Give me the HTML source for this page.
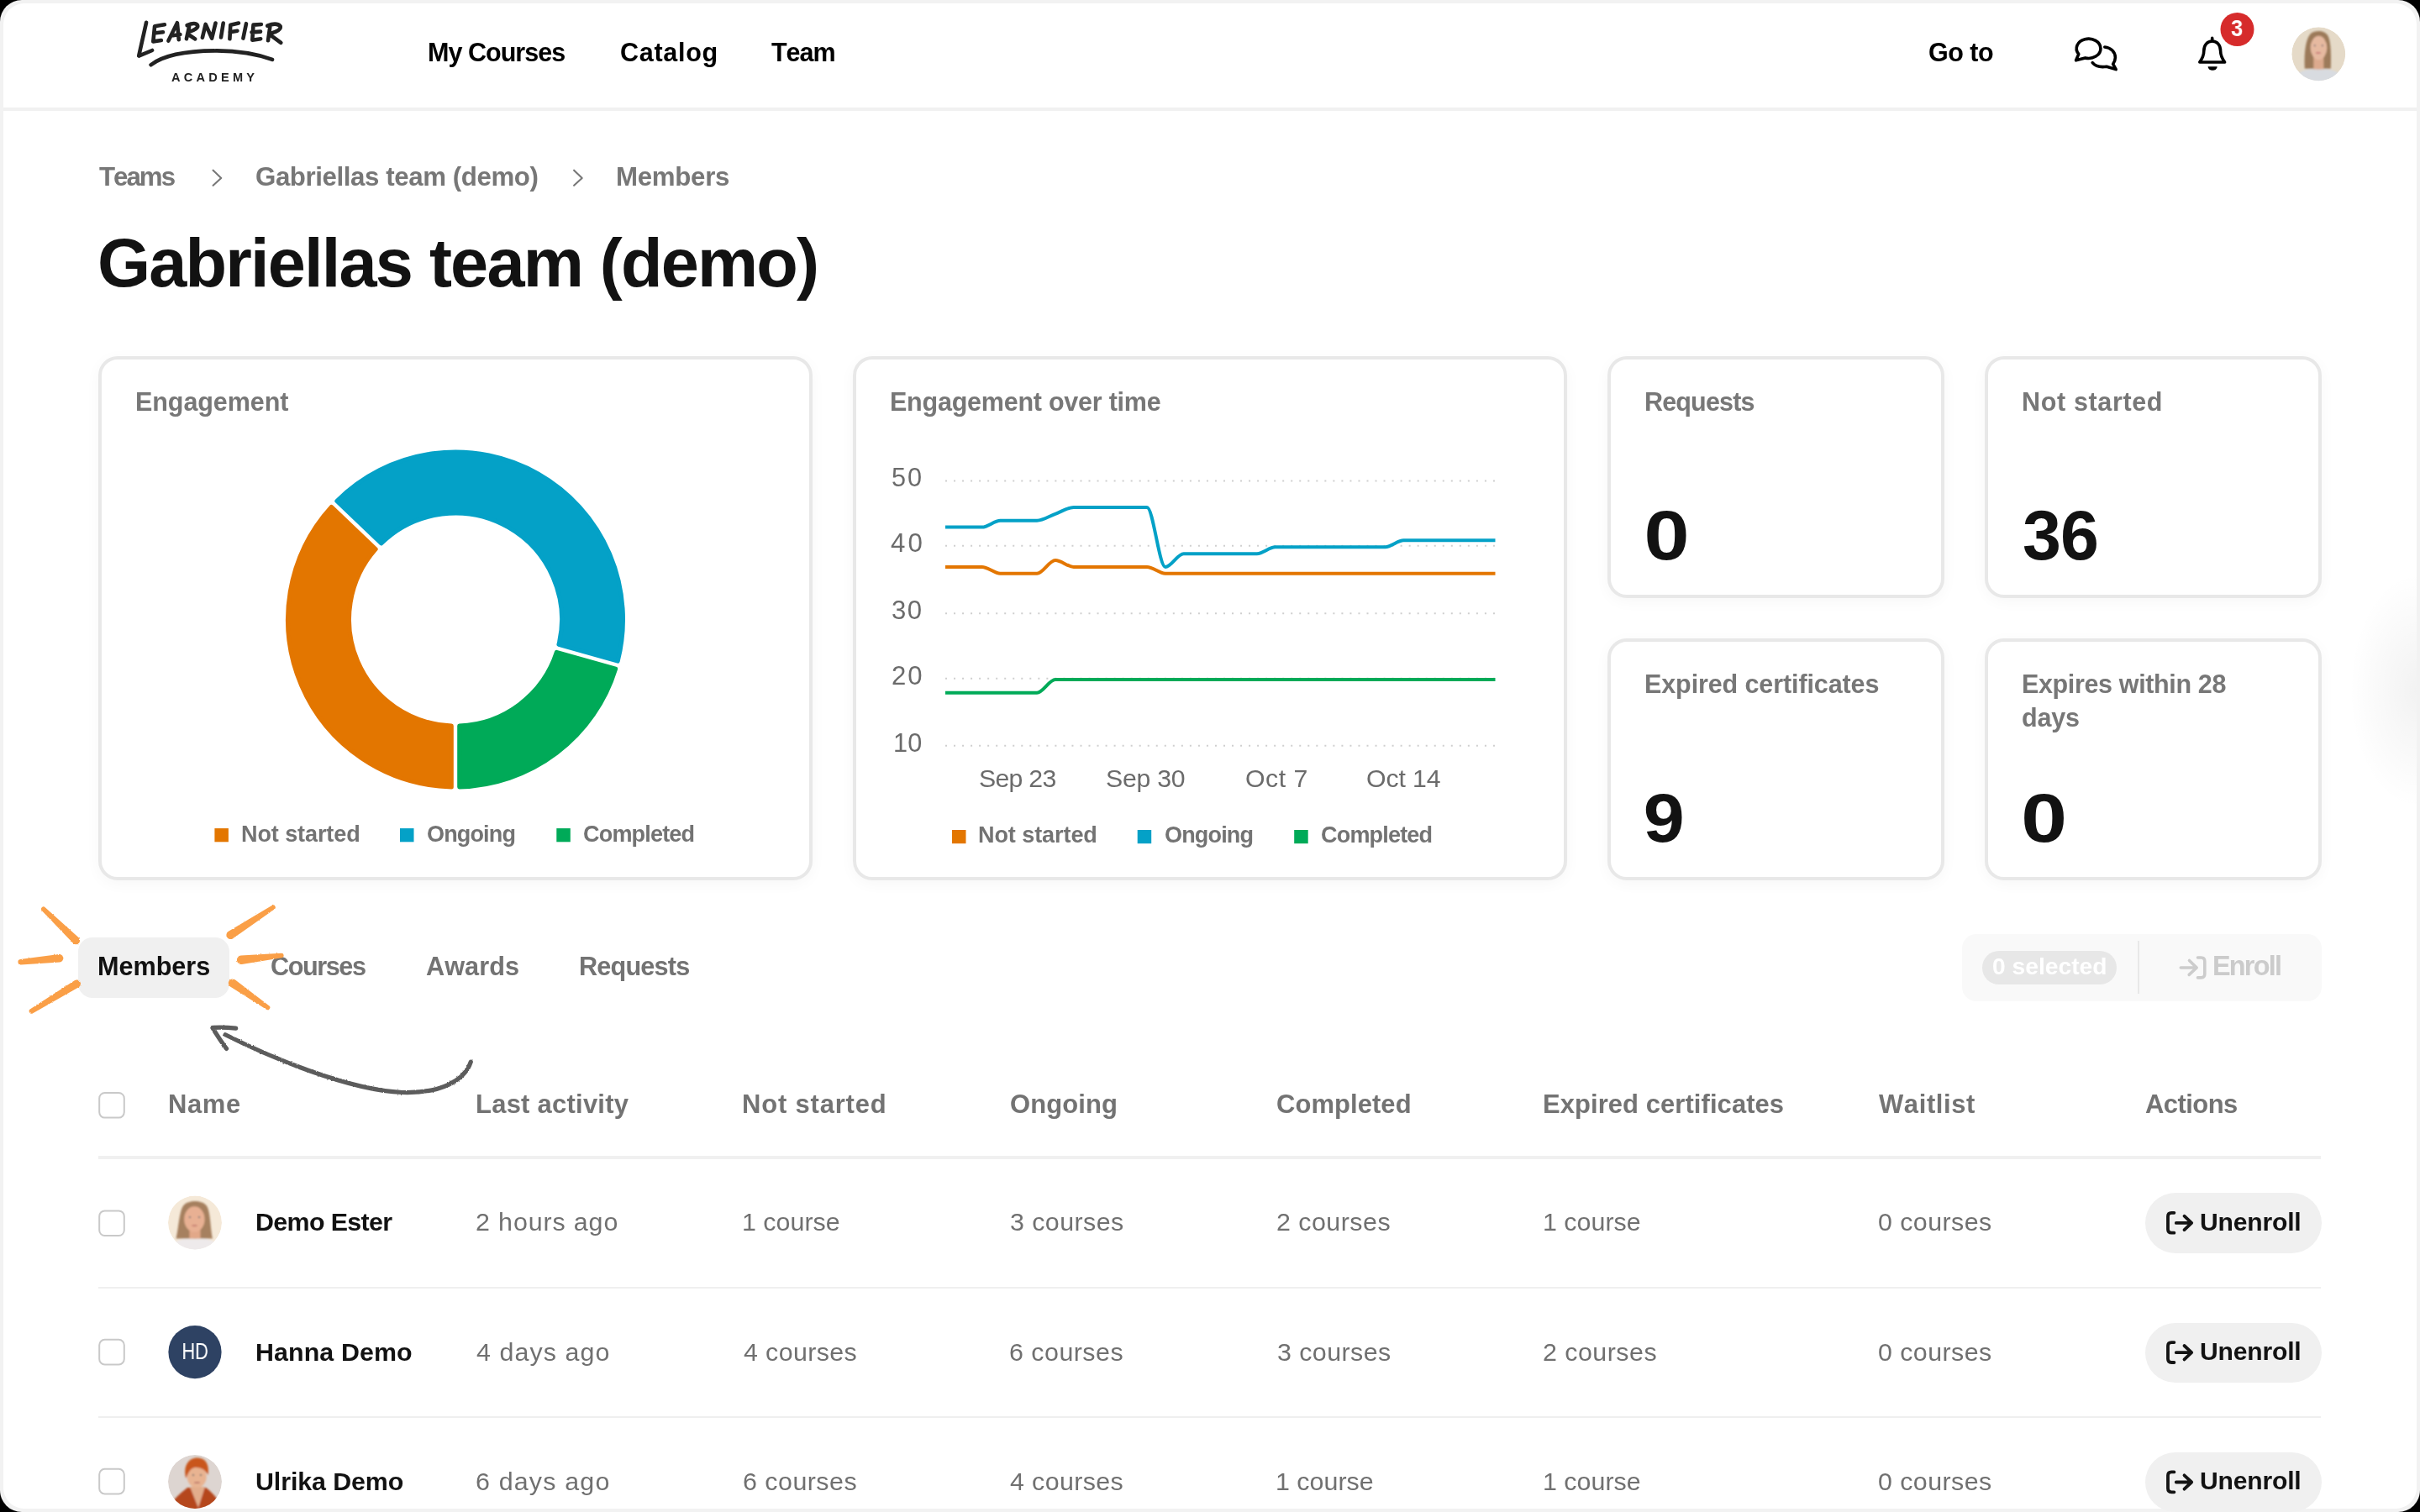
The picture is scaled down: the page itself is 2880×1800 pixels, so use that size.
<!DOCTYPE html>
<html><head><meta charset="utf-8"><style>
html,body{margin:0;padding:0}
body{width:2880px;height:1800px;overflow:hidden;position:relative;background:#000;font-family:"Liberation Sans",sans-serif}
.t{position:absolute;white-space:pre;font-kerning:none;will-change:transform}
.r{position:absolute}
.card{position:absolute;box-sizing:border-box;border:4px solid #e8e8e8;border-radius:23px;background:#fff;box-shadow:0 4px 18px rgba(0,0,0,0.035)}
svg{position:absolute;overflow:visible}
</style></head><body>
<div class="r" style="left:0;top:0;width:2880px;height:1800px;border-radius:26px;background:#f2f2f2"></div>
<div class="r" style="left:4px;top:4px;width:2872px;height:1792px;border-radius:25px;background:#fff;overflow:hidden"></div>
<div class="r" style="left:4px;top:128px;width:2872px;height:4px;background:#f1f1f1"></div>
<div class="r" style="left:2790px;top:680px;width:86px;height:285px;background:radial-gradient(ellipse 80px 140px at 86px 142px, rgba(0,0,0,0.05), rgba(0,0,0,0) 100%)"></div>
<div class="t " style="left:508.96px;top:47.00px;font-size:30.52px;line-height:30.52px;letter-spacing:-0.970px;color:#000;font-weight:700">My Courses</div>
<div class="t " style="left:737.75px;top:47.00px;font-size:30.52px;line-height:30.52px;letter-spacing:0.727px;color:#000;font-weight:700">Catalog</div>
<div class="t " style="left:918.26px;top:47.00px;font-size:30.52px;line-height:30.52px;letter-spacing:-1.034px;color:#000;font-weight:700">Team</div>
<div class="t " style="left:2295.35px;top:47.00px;font-size:30.52px;line-height:30.52px;letter-spacing:-0.508px;color:#000;font-weight:700">Go to</div>
<div class="t " style="left:204.34px;top:85.00px;font-size:14.54px;line-height:14.54px;letter-spacing:4.252px;color:#222;font-weight:700">ACADEMY</div>
<div class="t " style="left:117.65px;top:195.00px;font-size:31.25px;line-height:31.25px;letter-spacing:-1.996px;color:#777777;font-weight:700">Teams</div>
<div class="t " style="left:303.72px;top:195.00px;font-size:31.25px;line-height:31.25px;letter-spacing:-0.417px;color:#777777;font-weight:700">Gabriellas team (demo)</div>
<div class="t " style="left:732.91px;top:195.00px;font-size:31.25px;line-height:31.25px;letter-spacing:-0.306px;color:#777777;font-weight:700">Members</div>
<div class="t " style="left:115.87px;top:273.00px;font-size:81.11px;line-height:81.11px;letter-spacing:-1.809px;color:#121212;font-weight:700">Gabriellas team (demo)</div>
<div class="card" style="left:117px;top:424px;width:850px;height:624px"></div>
<div class="card" style="left:1015px;top:424px;width:850px;height:624px"></div>
<div class="card" style="left:1913px;top:424px;width:401px;height:288px"></div>
<div class="card" style="left:2362px;top:424px;width:401px;height:288px"></div>
<div class="card" style="left:1913px;top:760px;width:401px;height:288px"></div>
<div class="card" style="left:2362px;top:760px;width:401px;height:288px"></div>
<div class="t " style="left:160.96px;top:463.00px;font-size:30.52px;line-height:30.52px;letter-spacing:-0.084px;color:#777777;font-weight:700">Engagement</div>
<div class="t " style="left:1058.76px;top:463.00px;font-size:30.52px;line-height:30.52px;letter-spacing:-0.241px;color:#777777;font-weight:700">Engagement over time</div>
<div class="t " style="left:1957.26px;top:463.00px;font-size:30.52px;line-height:30.52px;letter-spacing:-0.844px;color:#777777;font-weight:700">Requests</div>
<div class="t " style="left:2406.46px;top:463.00px;font-size:30.52px;line-height:30.52px;letter-spacing:0.644px;color:#777777;font-weight:700">Not started</div>
<div class="t " style="left:1957.26px;top:799.00px;font-size:30.52px;line-height:30.52px;letter-spacing:-0.112px;color:#777777;font-weight:700">Expired certificates</div>
<div class="t " style="left:2406.46px;top:799.00px;font-size:30.52px;line-height:30.52px;letter-spacing:-0.368px;color:#777777;font-weight:700">Expires within 28</div>
<div class="t " style="left:2406.15px;top:839.00px;font-size:30.52px;line-height:30.52px;letter-spacing:-0.156px;color:#777777;font-weight:700">days</div>
<div class="t " style="left:1956.53px;top:596.00px;font-size:82.56px;line-height:82.56px;letter-spacing:0.000px;color:#121212;font-weight:700;transform-origin:3.27px 0;transform:scaleX(1.1766)">0</div>
<div class="t " style="left:2406.81px;top:596.00px;font-size:82.56px;line-height:82.56px;letter-spacing:-0.854px;color:#121212;font-weight:700">36</div>
<div class="t " style="left:1956.19px;top:934.00px;font-size:80.96px;line-height:80.96px;letter-spacing:0.000px;color:#121212;font-weight:700;transform-origin:2.81px 0;transform:scaleX(1.0889)">9</div>
<div class="t " style="left:2405.50px;top:934.00px;font-size:80.96px;line-height:80.96px;letter-spacing:0.000px;color:#121212;font-weight:700;transform-origin:3.20px 0;transform:scaleX(1.2155)">0</div>
<div class="t " style="left:286.59px;top:980.00px;font-size:27.04px;line-height:27.04px;letter-spacing:-0.101px;color:#737373;font-weight:700">Not started</div>
<div class="t " style="left:507.89px;top:980.00px;font-size:27.04px;line-height:27.04px;letter-spacing:-0.866px;color:#737373;font-weight:700">Ongoing</div>
<div class="t " style="left:693.89px;top:980.00px;font-size:27.04px;line-height:27.04px;letter-spacing:-0.825px;color:#737373;font-weight:700">Completed</div>
<div class="t " style="left:1164.49px;top:981.00px;font-size:27.04px;line-height:27.04px;letter-spacing:-0.081px;color:#737373;font-weight:700">Not started</div>
<div class="t " style="left:1385.69px;top:981.00px;font-size:27.04px;line-height:27.04px;letter-spacing:-0.849px;color:#737373;font-weight:700">Ongoing</div>
<div class="t " style="left:1571.89px;top:981.00px;font-size:27.04px;line-height:27.04px;letter-spacing:-0.825px;color:#737373;font-weight:700">Completed</div>
<div class="t " style="left:1164.93px;top:912.00px;font-size:30.23px;line-height:30.23px;letter-spacing:-0.704px;color:#6b6b6b;font-weight:400">Sep 23</div>
<div class="t " style="left:1315.93px;top:912.00px;font-size:30.23px;line-height:30.23px;letter-spacing:-0.254px;color:#6b6b6b;font-weight:400">Sep 30</div>
<div class="t " style="left:1481.77px;top:912.00px;font-size:30.23px;line-height:30.23px;letter-spacing:0.527px;color:#6b6b6b;font-weight:400">Oct 7</div>
<div class="t " style="left:1625.57px;top:912.00px;font-size:30.23px;line-height:30.23px;letter-spacing:-0.089px;color:#6b6b6b;font-weight:400">Oct 14</div>
<div class="t " style="left:1061.37px;top:553.00px;font-size:30.67px;line-height:30.67px;letter-spacing:2.013px;color:#6b6b6b;font-weight:400">50</div>
<div class="t " style="left:1059.58px;top:631.00px;font-size:31.25px;line-height:31.25px;letter-spacing:3.178px;color:#6b6b6b;font-weight:400">40</div>
<div class="t " style="left:1061.42px;top:711.00px;font-size:31.11px;line-height:31.11px;letter-spacing:1.501px;color:#6b6b6b;font-weight:400">30</div>
<div class="t " style="left:1061.04px;top:789.00px;font-size:31.11px;line-height:31.11px;letter-spacing:1.881px;color:#6b6b6b;font-weight:400">20</div>
<div class="t " style="left:1063.26px;top:869.00px;font-size:30.67px;line-height:30.67px;letter-spacing:0.121px;color:#6b6b6b;font-weight:400">10</div>
<div class="r" style="left:92.7px;top:1116px;width:180.8px;height:72px;background:#f0f0f0;border-radius:17px"></div>
<div class="t " style="left:115.95px;top:1135.00px;font-size:30.67px;line-height:30.67px;letter-spacing:-0.058px;color:#111;font-weight:700">Members</div>
<div class="t " style="left:321.74px;top:1135.00px;font-size:30.67px;line-height:30.67px;letter-spacing:-1.451px;color:#737373;font-weight:700">Courses</div>
<div class="t " style="left:507.24px;top:1135.00px;font-size:30.67px;line-height:30.67px;letter-spacing:0.047px;color:#737373;font-weight:700">Awards</div>
<div class="t " style="left:688.95px;top:1135.00px;font-size:30.67px;line-height:30.67px;letter-spacing:-0.821px;color:#737373;font-weight:700">Requests</div>
<div class="r" style="left:2335px;top:1111.7px;width:428px;height:80.29999999999995px;background:#f9f9f9;border-radius:17px"></div>
<div class="r" style="left:2359px;top:1132px;width:160px;height:40px;background:#e7e7e7;border-radius:20px"></div>
<div class="t " style="left:2370.88px;top:1136.00px;font-size:28.20px;line-height:28.20px;letter-spacing:0.022px;color:#fff;font-weight:700">0 selected</div>
<div class="r" style="left:2543.5px;top:1120px;width:2.0px;height:63.40000000000009px;background:#e8e8e8"></div>
<div class="t " style="left:2632.53px;top:1134.00px;font-size:32.41px;line-height:32.41px;letter-spacing:-1.776px;color:#cbcbcb;font-weight:700">Enroll</div>
<div class="t " style="left:200.03px;top:1300.00px;font-size:30.96px;line-height:30.96px;letter-spacing:0.635px;color:#737373;font-weight:700">Name</div>
<div class="t " style="left:565.93px;top:1300.00px;font-size:30.96px;line-height:30.96px;letter-spacing:0.257px;color:#737373;font-weight:700">Last activity</div>
<div class="t " style="left:883.33px;top:1300.00px;font-size:30.96px;line-height:30.96px;letter-spacing:0.830px;color:#737373;font-weight:700">Not started</div>
<div class="t " style="left:1201.53px;top:1300.00px;font-size:30.96px;line-height:30.96px;letter-spacing:0.133px;color:#737373;font-weight:700">Ongoing</div>
<div class="t " style="left:1519.43px;top:1300.00px;font-size:30.96px;line-height:30.96px;letter-spacing:0.080px;color:#737373;font-weight:700">Completed</div>
<div class="t " style="left:1835.93px;top:1300.00px;font-size:30.96px;line-height:30.96px;letter-spacing:0.078px;color:#737373;font-weight:700">Expired certificates</div>
<div class="t " style="left:2236.37px;top:1300.00px;font-size:30.96px;line-height:30.96px;letter-spacing:0.618px;color:#737373;font-weight:700">Waitlist</div>
<div class="t " style="left:2553.03px;top:1300.00px;font-size:30.96px;line-height:30.96px;letter-spacing:-0.548px;color:#737373;font-weight:700">Actions</div>
<div class="r" style="left:117px;top:1376px;width:2645px;height:4px;background:#f0f0f0"></div>
<div class="r" style="left:117px;top:1532px;width:2645px;height:2px;background:#efefef"></div>
<div class="r" style="left:117px;top:1686.3px;width:2645px;height:2.0px;background:#efefef"></div>
<div class="t " style="left:304.17px;top:1439.00px;font-size:30.38px;line-height:30.38px;letter-spacing:-0.638px;color:#121212;font-weight:700">Demo Ester</div>
<div class="t " style="left:566.47px;top:1439.00px;font-size:30.38px;line-height:30.38px;letter-spacing:0.885px;color:#707070;font-weight:400">2 hours ago</div>
<div class="t " style="left:883.09px;top:1439.00px;font-size:30.38px;line-height:30.38px;letter-spacing:0.021px;color:#707070;font-weight:400">1 course</div>
<div class="t " style="left:1201.64px;top:1439.00px;font-size:30.38px;line-height:30.38px;letter-spacing:0.444px;color:#707070;font-weight:400">3 courses</div>
<div class="t " style="left:1519.17px;top:1439.00px;font-size:30.38px;line-height:30.38px;letter-spacing:0.490px;color:#707070;font-weight:400">2 courses</div>
<div class="t " style="left:1835.69px;top:1439.00px;font-size:30.38px;line-height:30.38px;letter-spacing:0.021px;color:#707070;font-weight:400">1 course</div>
<div class="t " style="left:2235.21px;top:1439.00px;font-size:30.38px;line-height:30.38px;letter-spacing:0.448px;color:#707070;font-weight:400">0 courses</div>
<div class="r" style="left:2552.7px;top:1420.4px;width:210.30000000000018px;height:71.39999999999986px;background:#f0f0f0;border-radius:36px"></div>
<div class="t " style="left:2618.19px;top:1440.00px;font-size:30.09px;line-height:30.09px;letter-spacing:-0.184px;color:#121212;font-weight:700">Unenroll</div>
<div class="t " style="left:304.17px;top:1594.00px;font-size:30.38px;line-height:30.38px;letter-spacing:0.104px;color:#121212;font-weight:700">Hanna Demo</div>
<div class="t " style="left:567.30px;top:1594.00px;font-size:30.38px;line-height:30.38px;letter-spacing:1.094px;color:#707070;font-weight:400">4 days ago</div>
<div class="t " style="left:884.70px;top:1594.00px;font-size:30.38px;line-height:30.38px;letter-spacing:0.386px;color:#707070;font-weight:400">4 courses</div>
<div class="t " style="left:1201.26px;top:1594.00px;font-size:30.38px;line-height:30.38px;letter-spacing:0.492px;color:#707070;font-weight:400">6 courses</div>
<div class="t " style="left:1519.54px;top:1594.00px;font-size:30.38px;line-height:30.38px;letter-spacing:0.444px;color:#707070;font-weight:400">3 courses</div>
<div class="t " style="left:1836.47px;top:1594.00px;font-size:30.38px;line-height:30.38px;letter-spacing:0.490px;color:#707070;font-weight:400">2 courses</div>
<div class="t " style="left:2235.21px;top:1594.00px;font-size:30.38px;line-height:30.38px;letter-spacing:0.448px;color:#707070;font-weight:400">0 courses</div>
<div class="r" style="left:2552.7px;top:1574.7px;width:210.30000000000018px;height:71.39999999999986px;background:#f0f0f0;border-radius:36px"></div>
<div class="t " style="left:2618.19px;top:1594.00px;font-size:30.09px;line-height:30.09px;letter-spacing:-0.184px;color:#121212;font-weight:700">Unenroll</div>
<div class="t " style="left:304.38px;top:1748.00px;font-size:30.38px;line-height:30.38px;letter-spacing:-0.096px;color:#121212;font-weight:700">Ulrika Demo</div>
<div class="t " style="left:566.46px;top:1748.00px;font-size:30.38px;line-height:30.38px;letter-spacing:1.188px;color:#707070;font-weight:400">6 days ago</div>
<div class="t " style="left:883.86px;top:1748.00px;font-size:30.38px;line-height:30.38px;letter-spacing:0.492px;color:#707070;font-weight:400">6 courses</div>
<div class="t " style="left:1202.10px;top:1748.00px;font-size:30.38px;line-height:30.38px;letter-spacing:0.386px;color:#707070;font-weight:400">4 courses</div>
<div class="t " style="left:1518.39px;top:1748.00px;font-size:30.38px;line-height:30.38px;letter-spacing:0.021px;color:#707070;font-weight:400">1 course</div>
<div class="t " style="left:1835.69px;top:1748.00px;font-size:30.38px;line-height:30.38px;letter-spacing:0.021px;color:#707070;font-weight:400">1 course</div>
<div class="t " style="left:2235.21px;top:1748.00px;font-size:30.38px;line-height:30.38px;letter-spacing:0.448px;color:#707070;font-weight:400">0 courses</div>
<div class="r" style="left:2552.7px;top:1729.0px;width:210.30000000000018px;height:71.40000000000009px;background:#f0f0f0;border-radius:36px"></div>
<div class="t " style="left:2618.19px;top:1748.00px;font-size:30.09px;line-height:30.09px;letter-spacing:-0.184px;color:#121212;font-weight:700">Unenroll</div>
<svg width="2880" height="1800" viewBox="0 0 2880 1800" style="left:0;top:0"><g fill="none" stroke="#222" stroke-width="4.6" stroke-linecap="round" stroke-linejoin="round"><path d="M174.1,26.8 L165.2,66.6 L181.1,60"/><path d="M195.9,29.3 L184.1,31.2 L182.3,49.4 L191.9,48 M185,39.2 L194,38.3"/><path d="M200.4,48.6 L210.9,27.2 L212.8,47.2 M205.8,42.3 L214.4,41"/><path d="M225.2,31.2 L221.9,46.2 M222.6,30.2 C227,28.2 233,26.8 235,30 C236.5,33 231,36.2 225.2,37.8 L224.6,38 M225.6,42 L232.2,46.4"/><path d="M240.9,44.8 L244.7,28.9 L252.1,45.6 L256.5,27.6"/><path d="M265.7,27.6 L263,44.5"/><path d="M284,27.6 L274.3,29.8 L273.4,46.3 M273.6,38.2 L282.4,36.7"/><path d="M293,28.2 L289.4,45.6"/><path d="M310.9,29 L301.5,29.6 L300.3,47.7 L310.2,46.2 M299.5,38.4 L310,37.6"/><path d="M321.3,32 L319,48.2 M318.2,30.6 C323,28.8 330,27.2 333.6,31.2 C335,34.8 329,37.8 323.4,39.4 M322.4,42.2 L334.3,50.8"/><path d="M179.6,77.2 C196,64.5 228,60.5 258,60.4 C285,60.6 305,64 324,70.9"/></g><g fill="none" stroke="#000" stroke-width="3.6" stroke-linejoin="round" stroke-linecap="round"><path d="M2481.5,68.9 L2470.6,71.8 L2473.8,64.4 A14.35,11.6 0 1 1 2481.5,68.9 Z"/><path d="M2504.8,56 C2512,56.6 2517.4,62 2517.4,68.6 C2517.4,71.5 2516.2,74 2514.6,76.2 L2518.2,82.6 L2507,79.2 C2499,80.4 2493,78 2490.2,74.6"/></g><g fill="none" stroke="#000" stroke-width="3.6" stroke-linejoin="round" stroke-linecap="round"><path d="M2632.7,45.4 L2632.7,48.6"/><path d="M2617.8,74 C2621.4,69 2622.8,65.5 2622.8,60.5 C2622.8,53.5 2627,49 2632.7,49 C2638.4,49 2642.6,53.5 2642.6,60.5 C2642.6,65.5 2644,69 2647.6,74 Z"/></g><path d="M2627.6,79.2 L2638.7,79.2 A5.55,4.6 0 0 1 2627.6,79.2 Z" fill="#000"/><circle cx="2662.5" cy="35" r="20" fill="#d62b2b"/><g fill="none" stroke="#777" stroke-width="2.1" stroke-linecap="round" stroke-linejoin="round"><path d="M253.6,202.7 L263.2,212 L253.6,220.8"/><path d="M683.1,202.7 L692.7,212 L683.1,220.8"/></g><path d="M537.30,936.94 A199.5,199.5 0 0 1 394.35,603.34 L447.23,653.71 A126.5,126.5 0 0 0 537.30,863.91 Z" fill="#e37600" stroke="#e37600" stroke-width="5.0" stroke-linejoin="round"/><path d="M400.83,596.54 A199.5,199.5 0 0 1 735.21,787.19 L664.93,767.34 A126.5,126.5 0 0 0 453.71,646.91 Z" fill="#04a1c7" stroke="#04a1c7" stroke-width="5.0" stroke-linejoin="round"/><path d="M732.66,796.24 A199.5,199.5 0 0 1 546.70,936.94 L546.70,863.91 A126.5,126.5 0 0 0 662.38,776.39 Z" fill="#00aa58" stroke="#00aa58" stroke-width="5.0" stroke-linejoin="round"/><line x1="1125" y1="572.4" x2="1781" y2="572.4" stroke="#cfcfcf" stroke-width="2" stroke-dasharray="2 8.03"/><line x1="1125" y1="649.8" x2="1781" y2="649.8" stroke="#cfcfcf" stroke-width="2" stroke-dasharray="2 8.03"/><line x1="1125" y1="730.2" x2="1781" y2="730.2" stroke="#cfcfcf" stroke-width="2" stroke-dasharray="2 8.03"/><line x1="1125" y1="807.8" x2="1781" y2="807.8" stroke="#cfcfcf" stroke-width="2" stroke-dasharray="2 8.03"/><line x1="1125" y1="887.8" x2="1781" y2="887.8" stroke="#cfcfcf" stroke-width="2" stroke-dasharray="2 8.03"/><path d="M1125.00,824.72 C1132.27,824.72 1139.54,824.72 1146.82,824.72 C1154.09,824.72 1161.36,824.72 1168.63,824.72 C1175.91,824.72 1183.18,824.72 1190.45,824.72 C1197.72,824.72 1204.99,824.72 1212.27,824.72 C1219.54,824.72 1226.81,824.72 1234.08,824.72 C1241.36,824.72 1248.63,808.95 1255.90,808.95 C1263.17,808.95 1270.44,808.95 1277.72,808.95 C1284.99,808.95 1292.26,808.95 1299.53,808.95 C1306.81,808.95 1314.08,808.95 1321.35,808.95 C1328.62,808.95 1335.89,808.95 1343.17,808.95 C1350.44,808.95 1357.71,808.95 1364.98,808.95 C1372.26,808.95 1379.53,808.95 1386.80,808.95 C1394.07,808.95 1401.34,808.95 1408.62,808.95 C1415.89,808.95 1423.16,808.95 1430.43,808.95 C1437.71,808.95 1444.98,808.95 1452.25,808.95 C1459.52,808.95 1466.79,808.95 1474.07,808.95 C1481.34,808.95 1488.61,808.95 1495.88,808.95 C1503.16,808.95 1510.43,808.95 1517.70,808.95 C1524.97,808.95 1532.24,808.95 1539.52,808.95 C1546.79,808.95 1554.06,808.95 1561.33,808.95 C1568.61,808.95 1575.88,808.95 1583.15,808.95 C1590.42,808.95 1597.69,808.95 1604.97,808.95 C1612.24,808.95 1619.51,808.95 1626.78,808.95 C1634.06,808.95 1641.33,808.95 1648.60,808.95 C1655.87,808.95 1663.14,808.95 1670.42,808.95 C1677.69,808.95 1684.96,808.95 1692.23,808.95 C1699.51,808.95 1706.78,808.95 1714.05,808.95 C1721.32,808.95 1728.59,808.95 1735.87,808.95 C1743.14,808.95 1750.41,808.95 1757.68,808.95 C1764.96,808.95 1772.23,808.95 1779.50,808.95" fill="none" stroke="#00aa58" stroke-width="4"/><path d="M1125.00,674.90 C1132.27,674.90 1139.54,674.90 1146.82,674.90 C1154.09,674.90 1161.36,674.90 1168.63,674.90 C1175.91,674.90 1183.18,682.79 1190.45,682.79 C1197.72,682.79 1204.99,682.79 1212.27,682.79 C1219.54,682.79 1226.81,682.79 1234.08,682.79 C1241.36,682.79 1248.63,667.02 1255.90,667.02 C1263.17,667.02 1270.44,674.90 1277.72,674.90 C1284.99,674.90 1292.26,674.90 1299.53,674.90 C1306.81,674.90 1314.08,674.90 1321.35,674.90 C1328.62,674.90 1335.89,674.90 1343.17,674.90 C1350.44,674.90 1357.71,674.90 1364.98,674.90 C1372.26,674.90 1379.53,682.79 1386.80,682.79 C1394.07,682.79 1401.34,682.79 1408.62,682.79 C1415.89,682.79 1423.16,682.79 1430.43,682.79 C1437.71,682.79 1444.98,682.79 1452.25,682.79 C1459.52,682.79 1466.79,682.79 1474.07,682.79 C1481.34,682.79 1488.61,682.79 1495.88,682.79 C1503.16,682.79 1510.43,682.79 1517.70,682.79 C1524.97,682.79 1532.24,682.79 1539.52,682.79 C1546.79,682.79 1554.06,682.79 1561.33,682.79 C1568.61,682.79 1575.88,682.79 1583.15,682.79 C1590.42,682.79 1597.69,682.79 1604.97,682.79 C1612.24,682.79 1619.51,682.79 1626.78,682.79 C1634.06,682.79 1641.33,682.79 1648.60,682.79 C1655.87,682.79 1663.14,682.79 1670.42,682.79 C1677.69,682.79 1684.96,682.79 1692.23,682.79 C1699.51,682.79 1706.78,682.79 1714.05,682.79 C1721.32,682.79 1728.59,682.79 1735.87,682.79 C1743.14,682.79 1750.41,682.79 1757.68,682.79 C1764.96,682.79 1772.23,682.79 1779.50,682.79" fill="none" stroke="#e37600" stroke-width="4"/><path d="M1125.00,627.60 C1132.27,627.60 1139.54,627.60 1146.82,627.60 C1154.09,627.60 1161.36,627.60 1168.63,627.60 C1175.91,627.60 1183.18,619.71 1190.45,619.71 C1197.72,619.71 1204.99,619.71 1212.27,619.71 C1219.54,619.71 1226.81,619.71 1234.08,619.71 C1241.36,619.71 1248.63,614.45 1255.90,611.83 C1263.17,609.20 1270.44,603.94 1277.72,603.94 C1284.99,603.94 1292.26,603.94 1299.53,603.94 C1306.81,603.94 1314.08,603.94 1321.35,603.94 C1328.62,603.94 1335.89,603.94 1343.17,603.94 C1350.44,603.94 1357.71,603.94 1364.98,603.94 C1372.26,603.94 1379.53,674.90 1386.80,674.90 C1394.07,674.90 1401.34,659.13 1408.62,659.13 C1415.89,659.13 1423.16,659.13 1430.43,659.13 C1437.71,659.13 1444.98,659.13 1452.25,659.13 C1459.52,659.13 1466.79,659.13 1474.07,659.13 C1481.34,659.13 1488.61,659.13 1495.88,659.13 C1503.16,659.13 1510.43,651.25 1517.70,651.25 C1524.97,651.25 1532.24,651.25 1539.52,651.25 C1546.79,651.25 1554.06,651.25 1561.33,651.25 C1568.61,651.25 1575.88,651.25 1583.15,651.25 C1590.42,651.25 1597.69,651.25 1604.97,651.25 C1612.24,651.25 1619.51,651.25 1626.78,651.25 C1634.06,651.25 1641.33,651.25 1648.60,651.25 C1655.87,651.25 1663.14,643.37 1670.42,643.37 C1677.69,643.37 1684.96,643.37 1692.23,643.37 C1699.51,643.37 1706.78,643.37 1714.05,643.37 C1721.32,643.37 1728.59,643.37 1735.87,643.37 C1743.14,643.37 1750.41,643.37 1757.68,643.37 C1764.96,643.37 1772.23,643.37 1779.50,643.37" fill="none" stroke="#04a1c7" stroke-width="4"/><rect x="255.4" y="986.1" width="16.5" height="16.2" fill="#e37600"/><rect x="476" y="986.1" width="16.5" height="16.2" fill="#04a1c7"/><rect x="662.3" y="986.1" width="16.5" height="16.2" fill="#00aa58"/><rect x="1133" y="988" width="16.5" height="16.2" fill="#e37600"/><rect x="1353.7" y="988" width="16.5" height="16.2" fill="#04a1c7"/><rect x="1540.2" y="988" width="16.5" height="16.2" fill="#00aa58"/><defs><filter id="crayon" x="-10%" y="-10%" width="120%" height="120%"><feTurbulence type="fractalNoise" baseFrequency="0.9" numOctaves="2" seed="3" result="n"/><feDisplacementMap in="SourceGraphic" in2="n" scale="2.2" xChannelSelector="R" yChannelSelector="G"/></filter></defs><g filter="url(#crayon)"><path d="M49.89,1084.18 L87.09,1123.01 A4.75,4.75 0 0 0 93.71,1116.19 L53.71,1080.22 A2.75,2.75 0 0 0 49.89,1084.18 Z" fill="#fa9f47"/><path d="M24.82,1148.53 L71.06,1145.53 A4.75,4.75 0 0 0 70.14,1136.07 L24.18,1142.07 A3.25,3.25 0 0 0 24.82,1148.53 Z" fill="#fa9f47"/><path d="M39.16,1206.36 L93.67,1175.26 A4.75,4.75 0 0 0 88.73,1167.14 L36.04,1201.24 A3.00,3.00 0 0 0 39.16,1206.36 Z" fill="#fa9f47"/><path d="M276.92,1117.39 L326.50,1082.51 A2.75,2.75 0 0 0 323.50,1077.89 L271.48,1109.01 A5.00,5.00 0 0 0 276.92,1117.39 Z" fill="#fa9f47"/><path d="M287.79,1148.02 L335.31,1140.13 A2.75,2.75 0 0 0 334.69,1134.67 L286.61,1137.58 A5.25,5.25 0 0 0 287.79,1148.02 Z" fill="#fa9f47"/><path d="M273.95,1174.51 L317.03,1201.66 A2.75,2.75 0 0 0 320.17,1197.14 L279.65,1166.29 A5.00,5.00 0 0 0 273.95,1174.51 Z" fill="#fa9f47"/></g><g fill="none" stroke="#5c5c5c" stroke-width="5.2" stroke-linecap="round" stroke-linejoin="round" filter="url(#crayon)"><path d="M280.7,1224.2 C272,1223.2 262,1222.8 252.8,1223.4 C258,1232 263,1240 269.5,1248.4"/><path d="M268.1,1231.8 C320,1258 415,1298 478.8,1300.5 C525,1302 553,1286 560.3,1264.2"/></g><g fill="none" stroke="#cccccc" stroke-width="3.6" stroke-linecap="round" stroke-linejoin="round"><path d="M2595.3,1152 L2614,1152 M2605.5,1143.5 L2614.2,1152 L2605.2,1160.4 M2615.5,1140 L2619.5,1140 Q2623.8,1140 2623.8,1144.3 L2623.8,1159.6 Q2623.8,1163.9 2619.5,1163.9 L2615.5,1163.9"/></g><g transform="translate(0,0)" fill="none" stroke="#141414" stroke-width="3.8" stroke-linecap="round" stroke-linejoin="round"><path d="M2587.4,1443.8 L2584.2,1443.8 Q2580,1443.8 2580,1448 L2580,1463.5 Q2580,1467.7 2584.2,1467.7 L2587.4,1467.7 M2589.8,1455.9 L2607.8,1455.9 M2599.5,1447.7 L2608.2,1455.9 L2599.5,1464.1"/></g><g transform="translate(0,154.3)" fill="none" stroke="#141414" stroke-width="3.8" stroke-linecap="round" stroke-linejoin="round"><path d="M2587.4,1443.8 L2584.2,1443.8 Q2580,1443.8 2580,1448 L2580,1463.5 Q2580,1467.7 2584.2,1467.7 L2587.4,1467.7 M2589.8,1455.9 L2607.8,1455.9 M2599.5,1447.7 L2608.2,1455.9 L2599.5,1464.1"/></g><g transform="translate(0,308.6)" fill="none" stroke="#141414" stroke-width="3.8" stroke-linecap="round" stroke-linejoin="round"><path d="M2587.4,1443.8 L2584.2,1443.8 Q2580,1443.8 2580,1448 L2580,1463.5 Q2580,1467.7 2584.2,1467.7 L2587.4,1467.7 M2589.8,1455.9 L2607.8,1455.9 M2599.5,1447.7 L2608.2,1455.9 L2599.5,1464.1"/></g><rect x="118.2" y="1301.0" width="29.6" height="29.6" rx="6.5" fill="#fff" stroke="#c9c9c9" stroke-width="2"/><rect x="118.2" y="1441.4" width="29.6" height="29.6" rx="6.5" fill="#fff" stroke="#c9c9c9" stroke-width="2"/><rect x="118.2" y="1594.8" width="29.6" height="29.6" rx="6.5" fill="#fff" stroke="#c9c9c9" stroke-width="2"/><rect x="118.2" y="1748.8" width="29.6" height="29.6" rx="6.5" fill="#fff" stroke="#c9c9c9" stroke-width="2"/><defs><clipPath id="av0"><circle cx="2759.3" cy="64.2" r="32"/></clipPath><clipPath id="av1"><circle cx="232" cy="1455.5" r="32"/></clipPath><clipPath id="av2"><circle cx="232" cy="1764" r="32"/></clipPath><filter id="blur1" x="-20%" y="-20%" width="140%" height="140%"><feGaussianBlur stdDeviation="0.8"/></filter></defs><g clip-path="url(#av0)"><circle cx="2759.3" cy="64.2" r="32" fill="#e5dac8"/><g filter="url(#blur1)"><path d="M2742.80,81.70 C2741.80,64.20 2743.80,45.20 2750.30,39.70 C2755.30,35.70 2766.30,35.70 2770.30,42.20 C2774.30,49.20 2774.30,67.20 2773.80,81.70 Z" fill="#9c7a5a"/><rect x="2753.3" y="64.2" width="12" height="19" fill="#dcaa8e"/><ellipse cx="2759.5" cy="57.0" rx="9.8" ry="14.3" fill="#e6b9a0"/><path d="M2725.30,104.20 C2729.30,85.20 2741.30,81.70 2759.30,82.70 C2777.30,81.70 2789.30,85.20 2793.30,104.20 Z" fill="#d8dbe0"/><circle cx="2754.8" cy="54.2" r="1" fill="#6a6470"/><circle cx="2763.8" cy="54.2" r="1" fill="#6a6470"/><ellipse cx="2759.0" cy="63.0" rx="3.2" ry="1.1" fill="#c87878"/></g></g><g clip-path="url(#av1)"><circle cx="232" cy="1455.5" r="32" fill="#f5e9d8"/><g filter="url(#blur1)"><path d="M209.50,1474.50 C213.00,1459.50 213.50,1439.50 219.00,1434.50 C224.00,1428.50 240.00,1428.50 245.00,1434.50 C250.50,1439.50 250.00,1459.50 253.00,1474.50 Z" fill="#a6805f"/><rect x="225.5" y="1459.5" width="13" height="15" fill="#e2a889"/><ellipse cx="231.4" cy="1451.4" rx="12.2" ry="15.2" fill="#e8b093"/><path d="M198.00,1495.50 C202.00,1477.50 214.00,1474.00 232.00,1475.00 C250.00,1474.00 262.00,1477.50 266.00,1495.50 Z" fill="#eeeaeb"/><circle cx="226" cy="1449.0" r="1.1" fill="#5a6472"/><circle cx="237" cy="1449.0" r="1.1" fill="#5a6472"/><ellipse cx="231.5" cy="1459.1" rx="3.4" ry="1.1" fill="#c98074"/></g></g><g clip-path="url(#av2)"><circle cx="232" cy="1764" r="32" fill="#ddd5d1"/><g filter="url(#blur1)"><path d="M198.00,1804.00 C202.00,1788.00 212.00,1780.00 223.00,1771.00 L245.00,1771.00 C254.00,1778.00 262.00,1786.00 266.00,1804.00 Z" fill="#b5461f"/><path d="M226.00,1770.00 L244.00,1770.00 L236.00,1795.00 Z" fill="#e2ad8c"/><ellipse cx="234.2" cy="1758" rx="11.5" ry="13" fill="#e8b391"/><path d="M221.50,1760.00 C217.50,1746.00 224.00,1735.50 235.00,1735.50 C245.00,1735.50 249.50,1744.00 247.50,1756.00 C244.00,1749.00 238.00,1746.50 232.00,1747.00 C227.00,1747.50 224.00,1753.00 221.50,1760.00 Z" fill="#c9561d"/><circle cx="230" cy="1756" r="1.1" fill="#56626a"/><circle cx="239" cy="1756" r="1.1" fill="#56626a"/><ellipse cx="234.5" cy="1765" rx="3.6" ry="1.1" fill="#c07a6c"/></g></g><circle cx="232" cy="1609.6" r="31.6" fill="#2e4263"/></svg>
<div class="t " style="left:215.67px;top:1595.00px;font-size:27.18px;line-height:27.18px;letter-spacing:0.000px;color:#fff;font-weight:400;transform-origin:2.23px 0;transform:scaleX(0.8033)">HD</div>
<div class="t " style="left:2655.08px;top:20.00px;font-size:27.18px;line-height:27.18px;letter-spacing:0.000px;color:#fff;font-weight:700;transform-origin:0.62px 0;transform:scaleX(0.9400)">3</div>
</body></html>
